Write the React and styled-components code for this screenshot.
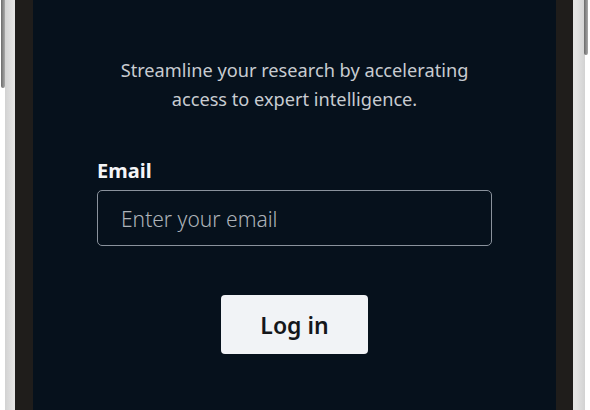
import React from 'react';
import styled, { createGlobalStyle } from 'styled-components';

const GlobalStyle = createGlobalStyle`
  html, body {
    margin: 0;
    padding: 0;
    background: #ffffff;
  }
  body {
    font-family: 'Noto Sans', 'Open Sans', sans-serif;
  }
`;

const Page = styled.div`
  position: relative;
  width: 590px;
  height: 410px;
  overflow: hidden;
  background: #ffffff;
  padding: 0 5px;
  box-sizing: border-box;
  display: flex;
`;

const Frame = styled.div`
  flex: 1;
  display: flex;
  background: linear-gradient(90deg, #d2d2d2 0%, #e4e4e4 1.5%, #e4e4e4 98.5%, #d2d2d2 100%);
  padding: 0 12px 0 10px;
`;

const Bezel = styled.div`
  flex: 1;
  display: flex;
  background: #1f1d1b;
  padding: 0 17px 0 18px;
`;

const Screen = styled.main`
  flex: 1;
  background: #06111c;
  display: flex;
  flex-direction: column;
  align-items: center;
  padding-top: 56px;
`;

const SideButton = styled.span`
  position: absolute;
  top: 0;
  ${(p) => (p.$side === 'left' ? 'left: 1px;' : 'right: 2px;')}
  width: 4px;
  height: ${(p) => p.$length}px;
  background: linear-gradient(90deg, #6b6b6b, #a9a9a9);
  border-radius: 0 0 2px 2px;
`;

const Tagline = styled.p`
  margin: 0;
  width: 420px;
  text-align: center;
  font-size: 18.2px;
  line-height: 29px;
  color: #c8ccd1;
`;

const Form = styled.form`
  width: 395px;
  margin-top: 44px;
  display: flex;
  flex-direction: column;
`;

const Label = styled.label`
  font-size: 20px;
  font-weight: 700;
  color: #f4f5f7;
  line-height: 26px;
  margin-bottom: 6px;
`;

const Input = styled.input`
  box-sizing: border-box;
  width: 100%;
  height: 56px;
  border: 1.5px solid #8a929c;
  border-radius: 5px;
  background: transparent;
  padding: 2px 23px 0;
  font-family: inherit;
  font-size: 21px;
  font-weight: 300;
  color: #e6e8eb;
  outline: none;

  &::placeholder {
    color: #adb3b9;
  }
`;

const Submit = styled.button`
  align-self: center;
  margin-top: 49px;
  width: 147px;
  height: 59px;
  border: none;
  border-radius: 4px;
  background: #f1f3f6;
  color: #14161a;
  font-family: inherit;
  font-size: 23px;
  font-weight: 600;
  cursor: pointer;
`;

export default function App() {
  return (
    <>
      <GlobalStyle />
      <Page>
        <SideButton $side="left" $length={88} />
        <SideButton $side="right" $length={55} />
        <Frame>
          <Bezel>
            <Screen>
              <Tagline>
                Streamline your research by accelerating
                <br />
                access to expert intelligence.
              </Tagline>
              <Form onSubmit={(e) => e.preventDefault()}>
                <Label htmlFor="email">Email</Label>
                <Input id="email" type="email" placeholder="Enter your email" />
                <Submit type="submit">Log in</Submit>
              </Form>
            </Screen>
          </Bezel>
        </Frame>
      </Page>
    </>
  );
}
